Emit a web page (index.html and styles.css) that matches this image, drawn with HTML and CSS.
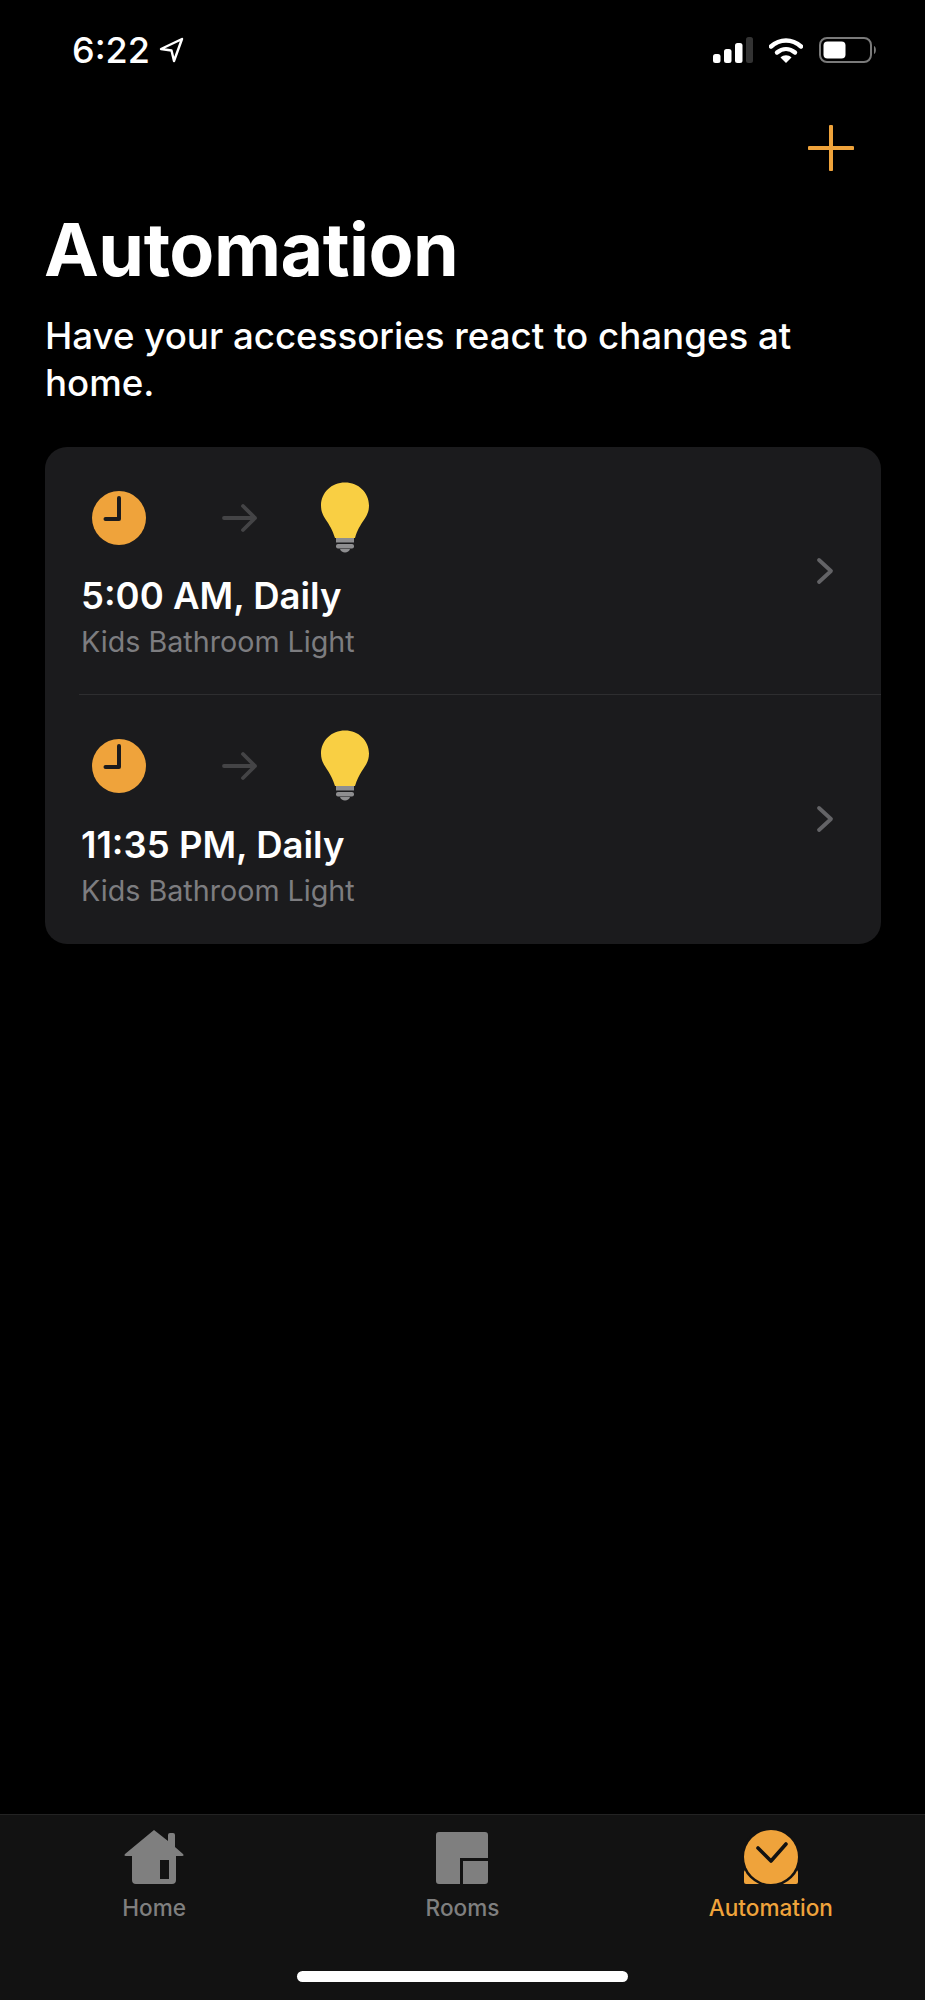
FILE: index.html
```html
<!doctype html>
<html lang="en">
  <head>
    <meta charset="UTF-8" />
    <meta name="viewport" content="width=device-width, initial-scale=1" />
    <title>Automation</title>
    <link rel="stylesheet" href="styles.css">
  </head>
  <body>
    <div class="page">
      <div class="status-bar">
        <div class="status-left">
          <span class="time">6:22</span>
          <svg class="location" width="25" height="26" viewBox="0 0 25 26">
            <path d="M23 2 L2 12 L12.5 13.5 L15 24 Z" fill="none" stroke="#fff" stroke-width="2.4" stroke-linejoin="round" />
          </svg>
        </div>
        <div class="status-right">
          <svg width="40" height="26" viewBox="0 0 40 26">
            <rect x="0" y="17" width="7.5" height="9" rx="2.5" fill="#fff" />
            <rect x="11" y="12" width="7.5" height="14" rx="2.5" fill="#fff" />
            <rect x="22" y="6" width="7.5" height="20" rx="2.5" fill="#fff" />
            <rect x="33" y="0" width="7" height="26" rx="2.5" fill="#333" />
          </svg>
          <svg width="34" height="26" viewBox="0 0 34 26">
            <path d="M2 9.5 C11 1.5 23 1.5 32 9.5" fill="none" stroke="#fff" stroke-width="4.4" stroke-linecap="round" />
            <path d="M8 15.5 C13.5 11 20.5 11 26 15.5" fill="none" stroke="#fff" stroke-width="4.4" stroke-linecap="round" />
            <path d="M11.5 20.5 C14.5 17.5 19.5 17.5 22.5 20.5 L17 26 Z" fill="#fff" />
          </svg>
          <svg width="58" height="26" viewBox="0 0 58 26">
            <rect x="1" y="1" width="51" height="24" rx="7" fill="none" stroke="#7a7a7a" stroke-width="2" />
            <rect x="4.5" y="4.5" width="22" height="17" rx="4" fill="#fff" />
            <path d="M55 9 C57.5 10 57.5 16 55 17 Z" fill="#7a7a7a" />
          </svg>
        </div>
      </div>

      <div class="toolbar">
        <svg width="46" height="46" viewBox="0 0 46 46">
          <path d="M23 1.5 V44.5 M1.5 23 H44.5" stroke="#efa33b" stroke-width="4" stroke-linecap="round" />
        </svg>
      </div>

      <h1>Automation</h1>
      <p class="subtitle">Have your accessories react to changes at home.</p>

      <div class="card">
        <div class="row row-first">
          <div class="row-main">
            <div class="row-icons">
              <svg class="clock" width="54" height="54" viewBox="0 0 54 54">
                <circle cx="27" cy="27" r="27" fill="#efa33b" />
                <path d="M27 7 V28 H13.5" fill="none" stroke="#1b1b1d" stroke-width="4" stroke-linecap="round" stroke-linejoin="round" />
              </svg>
              <svg class="arrow" width="36" height="30" viewBox="0 0 36 30">
                <path d="M2 15 H33 M21 3 L33 15 L21 27" fill="none" stroke="#444446" stroke-width="3.8" stroke-linecap="round" stroke-linejoin="round" />
              </svg>
              <svg class="bulb" width="50" height="72" viewBox="0 0 50 72">
                <path d="M25 0.5 C38.5 0.5 49 10.5 49 23.5 C49 36 40 39 35 56 H15 C10 39 1 36 1 23.5 C1 10.5 11.5 0.5 25 0.5 Z" fill="#f9cf43" />
                <rect x="16" y="56" width="18" height="4.5" fill="#8e8e90" />
                <rect x="16" y="62" width="18" height="4.5" rx="2" fill="#8e8e90" />
                <path d="M20 67 H30 C29 71.5 21 71.5 20 67 Z" fill="#8e8e90" />
              </svg>
            </div>
            <div class="row-title">5:00 AM, Daily</div>
            <div class="row-sub">Kids Bathroom Light</div>
          </div>
          <svg class="chevron" width="18" height="28" viewBox="0 0 18 28">
            <path d="M3 3 L15 14 L3 25" fill="none" stroke="#636366" stroke-width="3.8" stroke-linecap="round" stroke-linejoin="round" />
          </svg>
        </div>
        <div class="row">
          <div class="row-main">
            <div class="row-icons">
              <svg class="clock" width="54" height="54" viewBox="0 0 54 54">
                <circle cx="27" cy="27" r="27" fill="#efa33b" />
                <path d="M27 7 V28 H13.5" fill="none" stroke="#1b1b1d" stroke-width="4" stroke-linecap="round" stroke-linejoin="round" />
              </svg>
              <svg class="arrow" width="36" height="30" viewBox="0 0 36 30">
                <path d="M2 15 H33 M21 3 L33 15 L21 27" fill="none" stroke="#444446" stroke-width="3.8" stroke-linecap="round" stroke-linejoin="round" />
              </svg>
              <svg class="bulb" width="50" height="72" viewBox="0 0 50 72">
                <path d="M25 0.5 C38.5 0.5 49 10.5 49 23.5 C49 36 40 39 35 56 H15 C10 39 1 36 1 23.5 C1 10.5 11.5 0.5 25 0.5 Z" fill="#f9cf43" />
                <rect x="16" y="56" width="18" height="4.5" fill="#8e8e90" />
                <rect x="16" y="62" width="18" height="4.5" rx="2" fill="#8e8e90" />
                <path d="M20 67 H30 C29 71.5 21 71.5 20 67 Z" fill="#8e8e90" />
              </svg>
            </div>
            <div class="row-title">11:35 PM, Daily</div>
            <div class="row-sub">Kids Bathroom Light</div>
          </div>
          <svg class="chevron" width="18" height="28" viewBox="0 0 18 28">
            <path d="M3 3 L15 14 L3 25" fill="none" stroke="#636366" stroke-width="3.8" stroke-linecap="round" stroke-linejoin="round" />
          </svg>
        </div>
      </div>

      <div class="tab-bar">
        <div class="tabs">
          <div class="tab">
            <svg width="60" height="54" viewBox="0 0 60 54">
              <path d="M30 0 L44 11 V5 Q44 3 46 3 H49 Q51 3 51 5 V17 L59 24 Q60.5 26 58 26 H52 V50 Q52 54 48 54 H12 Q8 54 8 50 V26 H2 Q-0.5 26 1 24 Z M36 30 V49 H45 V30 Z" fill="#7f7f7f" fill-rule="evenodd" />
            </svg>
            <span>Home</span>
          </div>
          <div class="tab">
            <svg width="52" height="54" viewBox="0 0 52 54">
              <path d="M3 2 H49 Q52 2 52 5 V28 H24 V54 H3 Q0 54 0 51 V5 Q0 2 3 2 Z" fill="#7f7f7f" />
              <path d="M27 31 H52 V51 Q52 54 49 54 H27 Z" fill="#7f7f7f" />
            </svg>
            <span>Rooms</span>
          </div>
          <div class="tab tab-active">
            <svg width="54" height="54" viewBox="0 0 54 54">
              <rect x="0" y="40" width="54" height="14" rx="2" fill="#efa33b" />
              <circle cx="27" cy="27" r="29.5" fill="#121212" />
              <circle cx="27" cy="27" r="27" fill="#efa33b" />
              <path d="M14 18 L27 31 L42 14" fill="none" stroke="#121212" stroke-width="3.6" stroke-linecap="round" stroke-linejoin="round" />
            </svg>
            <span>Automation</span>
          </div>
        </div>
        <div class="home-indicator"></div>
      </div>
    </div>
  </body>
</html>
```

FILE: styles.css
```css
* {
  box-sizing: border-box;
}
body {
  margin: 0;
  background: #000;
  color: #fff;
  font-family: Inter, "Noto Sans", sans-serif;
}
.page {
  display: flex;
  flex-direction: column;
  min-height: 2000px;
}
.status-bar {
  display: flex;
  justify-content: space-between;
  align-items: center;
  height: 26px;
  margin-top: 37px;
  padding: 0 48px 0 72px;
}
.status-left {
  display: flex;
  align-items: center;
  gap: 9px;
}
.time {
  font-size: 36px;
  font-weight: 500;
  line-height: 26px;
}
.status-right {
  display: flex;
  align-items: center;
  gap: 16px;
}
.location {
  display: block;
}
.toolbar {
  display: flex;
  justify-content: flex-end;
  margin-top: 62px;
  padding-right: 71px;
}
h1 {
  margin: 37px 0 0;
  padding-left: 44px;
  font-size: 73.5px;
  font-weight: 700;
  line-height: 84px;
  letter-spacing: -0.5px;
}
.subtitle {
  margin: 20px 0 0;
  padding: 0 90px 0 45px;
  font-size: 36.7px;
  font-weight: 500;
  line-height: 47px;
}
.card {
  margin: 41px 44px 0 45px;
  padding-bottom: 1px;
  background: #1b1b1d;
  border-radius: 22px;
}
.row {
  display: flex;
  justify-content: space-between;
  align-items: center;
  height: 248px;
  margin-left: 34px;
  padding: 0 47px 0 2px;
}
.row-first {
  border-bottom: 1px solid #2e2e30;
}
.row-main {
  padding-top: 3px;
}
.row-icons {
  display: flex;
  align-items: center;
  height: 71px;
  padding-left: 11px;
}
.arrow {
  margin-left: 76px;
}
.bulb {
  margin-left: 62px;
}
.row-title {
  margin-top: 21px;
  font-size: 36.5px;
  font-weight: 600;
  line-height: 44px;
}
.row-sub {
  margin-top: 4px;
  font-size: 28.7px;
  line-height: 40px;
  color: #7d7d80;
}
.tab-bar {
  margin-top: auto;
  height: 186px;
  background: #121212;
  border-top: 1px solid #232323;
  padding-top: 15px;
}
.tabs {
  display: grid;
  grid-template-columns: repeat(3, 1fr);
}
.tab {
  display: flex;
  flex-direction: column;
  align-items: center;
  gap: 10px;
  font-size: 22.6px;
  font-weight: 500;
  line-height: 28px;
  color: #7f7f7f;
}
.tab-active {
  color: #efa33b;
}
.home-indicator {
  width: 331px;
  height: 11px;
  margin: 49px auto 0;
  border-radius: 6px;
  background: #fff;
}
```
